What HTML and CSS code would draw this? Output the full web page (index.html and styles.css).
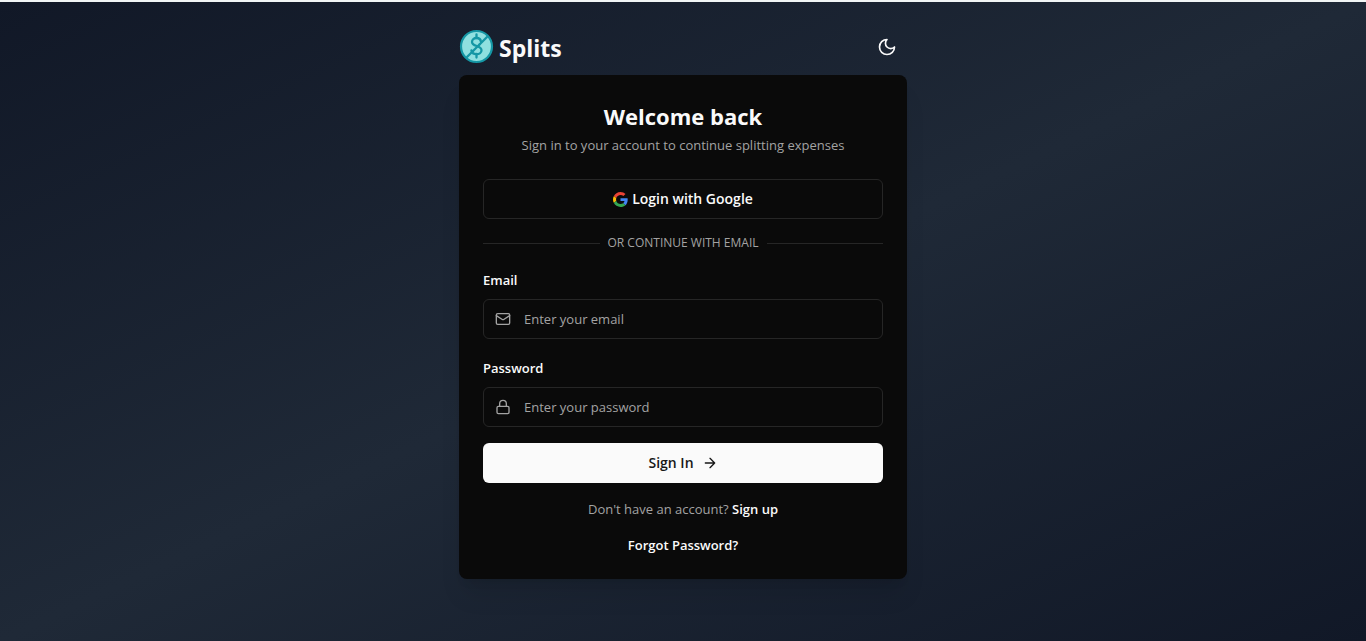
FILE: index.html
```html
<!DOCTYPE html>
<html lang="en">
<head>
<meta charset="utf-8">
<meta name="viewport" content="width=device-width, initial-scale=1">
<title>Splits - Sign in</title>
<link rel="stylesheet" href="styles.css">
</head>
<body>
<main class="page">
  <div class="panel">
    <header class="topbar">
      <a class="brand" href="#">
        <svg class="brand-mark" viewBox="0 0 35 35" fill="none" aria-hidden="true">
          <circle cx="17.500" cy="17.500" r="15.500" fill="#8fe0e0" stroke="#1597a5" stroke-width="2.200"/>
          <g stroke="#1597a5" stroke-width="2.300" stroke-linecap="round">
            <path d="M8 28 14 22M20.500 15.500 28 8"/>
            <path d="M17.500 5.500v3.500M17.500 25v3.500"/>
            <path d="M22 13C21.800 10.500 20 9 17.500 9C15 9 13 10.600 13 12.900C13 18 22.500 16 22.500 21.200C22.500 23.600 20.400 25.200 17.500 25.200C14.800 25.200 12.800 23.800 12.400 21.500"/>
            <path d="M14 22 20.500 15.500"/>
          </g>
        </svg>
        <span class="brand-name">Splits</span>
      </a>
      <button class="theme-button" type="button" aria-label="Toggle theme">
        <svg class="icon-large" viewBox="0 0 24 24" aria-hidden="true"><path d="M12 3a6 6 0 0 0 9 9 9 9 0 1 1-9-9Z"/></svg>
      </button>
    </header>
    <section class="card">
      <div class="card-header">
        <h1 class="title">Welcome back</h1>
        <p class="subtitle">Sign in to your account to continue splitting expenses</p>
      </div>
      <button class="button button-outline" type="button">
        <svg class="google" viewBox="0 0 48 48" aria-hidden="true">
          <path fill="#ea4335" d="M24 9.500c3.540 0 6.710 1.220 9.210 3.600l6.850-6.850C35.900 2.380 30.470 0 24 0 14.620 0 6.510 5.380 2.560 13.220l7.980 6.190C12.430 13.720 17.740 9.500 24 9.500z"/>
          <path fill="#4285f4" d="M46.980 24.550c0-1.570-.15-3.090-.38-4.550H24v9.020h12.940c-.58 2.960-2.260 5.480-4.780 7.180l7.730 6c4.510-4.180 7.090-10.360 7.090-17.650z"/>
          <path fill="#fbbc05" d="M10.530 28.590c-.48-1.450-.76-2.990-.76-4.590s.27-3.140.76-4.590l-7.980-6.190C.92 16.460 0 20.120 0 24c0 3.880.92 7.540 2.560 10.780l7.970-6.190z"/>
          <path fill="#34a853" d="M24 48c6.480 0 11.930-2.130 15.890-5.810l-7.730-6c-2.150 1.450-4.920 2.300-8.160 2.300-6.260 0-11.570-4.220-13.470-9.910l-7.980 6.190C6.510 42.620 14.620 48 24 48z"/>
        </svg>
        Login with Google
      </button>
      <div class="divider">Or continue with email</div>
      <form class="form">
        <div class="field">
          <label class="label" for="email">Email</label>
          <div class="control">
            <svg class="icon" viewBox="0 0 24 24" aria-hidden="true"><rect width="20" height="16" x="2" y="4" rx="2"/><path d="m22 7-8.970 5.700a1.940 1.940 0 0 1-2.060 0L2 7"/></svg>
            <input class="input" id="email" type="email" placeholder="Enter your email">
          </div>
        </div>
        <div class="field">
          <label class="label" for="password">Password</label>
          <div class="control">
            <svg class="icon" viewBox="0 0 24 24" aria-hidden="true"><rect width="18" height="11" x="3" y="11" rx="2"/><path d="M7 11V7a5 5 0 0 1 10 0v4"/></svg>
            <input class="input" id="password" type="password" placeholder="Enter your password">
          </div>
        </div>
        <button class="button button-primary" type="submit">
          Sign In
          <svg class="icon" viewBox="0 0 24 24" aria-hidden="true"><path d="M5 12h14M12 5l7 7-7 7"/></svg>
        </button>
      </form>
      <p class="note">Don't have an account? <a class="link" href="#">Sign up</a></p>
      <p class="note"><a class="link" href="#">Forgot Password?</a></p>
    </section>
  </div>
</main>
</body>
</html>
```
FILE: styles.css
```css
*, *::before, *::after { box-sizing: border-box; }

body {
  margin: 0;
  font-family: "Open Sans", "Noto Sans", sans-serif;
  font-size: 13px;
  line-height: 20px;
  color: #fafafa;
}

.page {
  min-height: 100vh;
  padding: 24px 16px 32px;
  display: flex;
  justify-content: center;
  align-items: flex-start;
  border-top: 2px solid #f1f5f5;
  background: linear-gradient(to bottom right, #111827, #1f2937, #111827);
}

.panel { width: 100%; max-width: 448px; }

.topbar {
  display: flex;
  align-items: center;
  justify-content: space-between;
  height: 41px;
  margin-bottom: 8px;
}

.brand {
  display: flex;
  align-items: center;
  gap: 5px;
  color: inherit;
  text-decoration: none;
}
.brand-mark { width: 35px; height: 35px; }
.brand-name { padding-top: 2px; font-size: 23px; line-height: 32px; font-weight: 700; }

.theme-button {
  display: grid;
  place-items: center;
  width: 40px;
  height: 40px;
  padding: 0;
  border: 0;
  border-radius: 6px;
  background: transparent;
  color: inherit;
}

.icon, .icon-large {
  flex: none;
  width: 16px;
  height: 16px;
  fill: none;
  stroke: currentColor;
  stroke-width: 2;
  stroke-linecap: round;
  stroke-linejoin: round;
}
.icon-large { width: 20px; height: 20px; }

.card {
  display: flex;
  flex-direction: column;
  gap: 16px;
  padding: 24px;
  border-radius: 8px;
  background: #0a0a0a;
  box-shadow: 0 20px 25px -5px rgb(0 0 0 / 10%), 0 8px 10px -6px rgb(0 0 0 / 10%);
}

.card-header { margin-bottom: 8px; text-align: center; }
.title { margin: 0 0 2px; font-size: 22px; line-height: 34px; font-weight: 700; }
.subtitle, .note { margin: 0; color: #a3a3a3; }
.note { text-align: center; }

.button {
  display: flex;
  align-items: center;
  justify-content: center;
  width: 100%;
  height: 40px;
  padding: 0 16px;
  border: 0;
  border-radius: 6px;
  font: inherit;
  font-size: 14px;
  font-weight: 600;
}
.button-outline { gap: 4px; border: 1px solid #262626; background: transparent; color: #fafafa; }
.button-primary { gap: 8px; background: #fafafa; color: #171717; }
.google { width: 15px; height: 15px; }

.divider {
  display: flex;
  align-items: center;
  gap: 8px;
  font-size: 12px;
  line-height: 16px;
  text-transform: uppercase;
  color: #a3a3a3;
}
.divider::before, .divider::after { content: ""; flex: 1; height: 1px; background: #262626; }

.form { display: flex; flex-direction: column; gap: 16px; }
.field { display: flex; flex-direction: column; gap: 8px; }
.label { padding-top: 2px; line-height: 22px; font-weight: 600; }

.control {
  display: flex;
  align-items: center;
  gap: 13px;
  height: 40px;
  padding: 0 11px;
  border: 1px solid #262626;
  border-radius: 6px;
  color: #a3a3a3;
}
.input {
  flex: 1;
  min-width: 0;
  padding: 0;
  border: 0;
  outline: 0;
  background: transparent;
  font: inherit;
  color: #fafafa;
}
.input::placeholder { color: #a3a3a3; opacity: 1; }

.link { color: #fafafa; font-weight: 600; text-decoration: none; }
```
